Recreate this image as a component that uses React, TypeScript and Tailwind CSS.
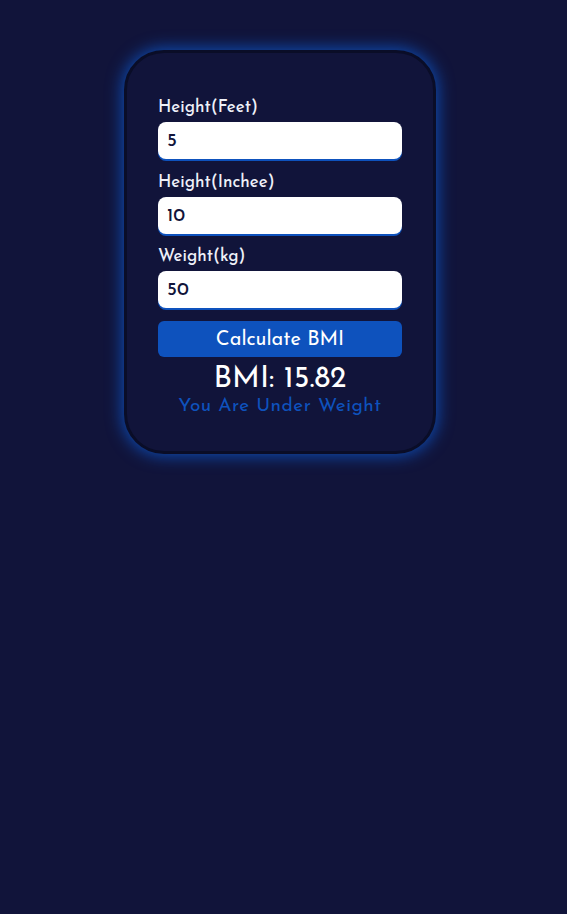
import { useState } from "react";

function Field({ label, value, onChange }: { label: string; value: string; onChange: (v: string) => void }) {
    return (
        <div className="flex flex-col">
            <label className="text-[17px] leading-[19px] font-medium text-[#eef0f8] mb-[5px]">{label}</label>
            <input
                type="text"
                value={value}
                onChange={(e) => onChange(e.target.value)}
                className="h-[37px] w-full rounded-[8px] bg-white px-[9px] pt-[2px] text-[19px] font-medium text-[#11143a] outline-none shadow-[0_2px_0_#0e52bd]"
            />
        </div>
    );
}

export default function App() {
    const [feet, setFeet] = useState("5");
    const [inches, setInches] = useState("10");
    const [weight, setWeight] = useState("50");

    return (
        <div
            className="min-h-[914px] w-full bg-[#11143a] pt-[50px]"
            style={{ fontFamily: '"Josefin Sans", Lato, "Open Sans", sans-serif' }}
        >
            <div className="ml-[124px] w-[312px] rounded-[40px] border-[3px] border-[#0a0d27] bg-[#11143a] px-[31px] pt-[45px] pb-[33px] shadow-[0_0_16px_2px_#0e4bb0]">
                <div className="flex flex-col gap-[13.5px]">
                    <Field label="Height(Feet)" value={feet} onChange={setFeet} />
                    <Field label="Height(Inchee)" value={inches} onChange={setInches} />
                    <Field label="Weight(kg)" value={weight} onChange={setWeight} />
                </div>
                <button className="mt-[13px] h-[36px] w-full rounded-[6px] bg-[#0e52bd] pt-[2px] text-[20px] font-normal text-white">
                    Calculate BMI
                </button>
                <div className="mt-[5px] text-center text-[30px] leading-[36px] font-normal text-white">BMI: 15.82</div>
                <div className="-mt-[2px] text-center text-[19px] leading-[22px] tracking-[0.5px] text-[#0e52bd]">You Are Under Weight</div>
            </div>
        </div>
    );
}
